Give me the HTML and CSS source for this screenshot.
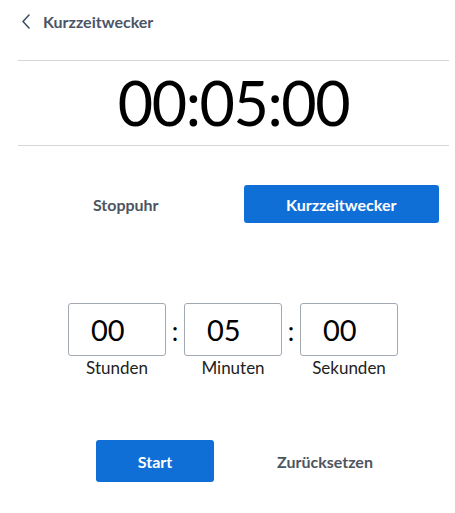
FILE: index.html
```html
<!DOCTYPE html>
<html lang="de">
<head>
<meta charset="utf-8">
<title>Kurzzeitwecker</title>
<link rel="stylesheet" href="styles.css">
</head>
<body>
<div class="page">
  <header class="header">
    <svg class="back" width="10" height="15" viewBox="0 0 10 15"><polyline points="8,1 2,7.5 8,14" fill="none" stroke="#3f5068" stroke-width="1.6" stroke-linecap="round" stroke-linejoin="round"/></svg>
    <span class="title">Kurzzeitwecker</span>
  </header>
  <div class="divider"></div>
  <div class="clock">00:05:00</div>
  <div class="divider"></div>
  <div class="modes">
    <div class="mode-cell"><button class="btn btn-plain">Stoppuhr</button></div>
    <div class="mode-cell"><button class="btn btn-primary">Kurzzeitwecker</button></div>
  </div>
  <div class="timer">
    <div class="field">
      <div class="box">00</div>
      <div class="label">Stunden</div>
    </div>
    <div class="sep">:</div>
    <div class="field">
      <div class="box">05</div>
      <div class="label">Minuten</div>
    </div>
    <div class="sep">:</div>
    <div class="field">
      <div class="box">00</div>
      <div class="label">Sekunden</div>
    </div>
  </div>
  <div class="actions">
    <button class="btn btn-primary btn-start">Start</button>
    <button class="btn btn-plain btn-reset">Zurücksetzen</button>
  </div>
</div>
</body>
</html>
```
FILE: styles.css
```css
html, body {
  margin: 0;
  padding: 0;
  background: #ffffff;
}
body {
  font-family: Lato, "Open Sans", sans-serif;
  color: #1a1a1a;
}
.page {
  padding: 0 6px 0 18px;
}
.header {
  height: 42px;
  display: flex;
  align-items: center;
}
.back {
  margin-left: 3px;
  margin-right: 12px;
}
.title {
  font-size: 16px;
  font-weight: 700;
  color: #4a5567;
}
.divider {
  border-top: 1px solid #d4d7dc;
  margin-top: 18px;
}
.clock + .divider {
  margin-top: 0;
}
.clock {
  height: 84px;
  line-height: 84px;
  text-align: center;
  font-size: 61px;
  color: #000;
  letter-spacing: -1.4px;
}
.modes {
  margin-top: 39px;
  display: grid;
  grid-template-columns: 1fr 1fr;
}
.mode-cell {
  padding: 0 10px;
}
.btn {
  font-family: inherit;
  font-size: 16px;
  font-weight: 700;
  border: none;
  border-radius: 3px;
  height: 38px;
  width: 100%;
  cursor: pointer;
}
.btn-plain {
  background: transparent;
  color: #4d5561;
}
.btn-primary {
  background: #0f6fd7;
  color: #ffffff;
}
.timer {
  margin-top: 80px;
  display: flex;
  justify-content: center;
  margin-left: 50px;
  margin-right: 51px;
}
.field {
  display: flex;
  flex-direction: column;
  align-items: center;
}
.box {
  box-sizing: border-box;
  width: 98px;
  height: 53px;
  border: 1px solid #a3a9b2;
  border-radius: 3px;
  font-size: 29px;
  line-height: 51px;
  padding-left: 22px;
  color: #000;
}
.label {
  font-size: 17px;
  line-height: 22px;
  margin-top: 1px;
  color: #222;
}
.sep {
  width: 20px;
  text-align: center;
  font-size: 26px;
  line-height: 53px;
  padding-top: 2px;
  color: #000;
}
.actions {
  margin-top: 61px;
  display: flex;
  padding-left: 78px;
  gap: 52px;
}
.btn-start {
  width: 118px;
  height: 42px;
}
.btn-reset {
  width: 118px;
  height: 42px;
}
```
